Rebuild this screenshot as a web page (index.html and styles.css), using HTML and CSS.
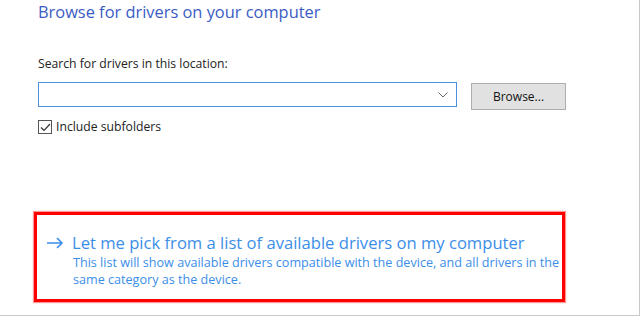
FILE: index.html
```html
<!DOCTYPE html>
<html lang="en">
<head>
    <meta charset="UTF-8">
    <title>Browse for drivers</title>
    <link rel="stylesheet" href="styles.css">
</head>
<body>
    <div class="ventana">
        <h1 class="titulo">Browse for drivers on your computer</h1>

        <p class="etiqueta">Search for drivers in this location:</p>
        <div class="fila">
            <div class="combo">
                <svg class="flecha" width="10" height="6" viewBox="0 0 10 6"><path d="M0.5 0.5 L5 5 L9.5 0.5" fill="none" stroke="#666" stroke-width="1"/></svg>
            </div>
            <button class="examinar">Browse...</button>
        </div>

        <label class="check">
            <span class="caja"><svg width="11" height="9" viewBox="0 0 11 9"><path d="M1 4.5 L4 7.5 L10 1" fill="none" stroke="#333" stroke-width="1.2"/></svg></span>
            Include subfolders
        </label>

        <div class="elegir">
            <div class="elegir-titulo">
                <svg class="flecha-link" width="18" height="12" viewBox="0 0 18 12"><path d="M1 6 H16 M11 1 L16 6 L11 11" fill="none" stroke="#3b8ee8" stroke-width="1.6"/></svg>
                <span>Let me pick from a list of available drivers on my computer</span>
            </div>
            <p class="elegir-texto">This list will show available drivers compatible with the device, and all drivers in the same category as the device.</p>
        </div>
    </div>
</body>
</html>
```

FILE: styles.css
```css
body{
    margin: 0;
    background-color: white;
    font-family: "Open Sans", "Noto Sans", sans-serif;
}

.ventana{
    width: 601px;
    height: 315px;
    padding-left: 38px;
    border-right: 1px solid #c9c9c9;
    border-bottom: 1px solid #c9c9c9;
    overflow: hidden;
}

.titulo{
    margin: 0;
    padding-top: 1px;
    font-size: 16.4px;
    font-weight: normal;
    color: #3a5cc4;
    line-height: 22px;
}

.etiqueta{
    margin: 33px 0 0 0;
    font-size: 12.2px;
    line-height: 16px;
    color: #222;
}

.fila{
    display: flex;
    align-items: flex-start;
    margin-top: 10px;
}

.combo{
    width: 417px;
    height: 23px;
    border: 1px solid #4a90dc;
    position: relative;
}

.flecha{
    position: absolute;
    right: 8px;
    top: 9px;
}

.examinar{
    margin-left: 14px;
    margin-top: 1px;
    width: 95px;
    height: 27px;
    background-color: #e1e1e1;
    border: 1px solid #adadad;
    font-family: "Open Sans", "Noto Sans", sans-serif;
    font-size: 12px;
    color: #111;
    padding: 0;
}

.check{
    display: flex;
    align-items: center;
    margin-top: 9px;
    font-size: 12.2px;
    color: #222;
    line-height: 16px;
}

.caja{
    width: 12px;
    height: 12px;
    border: 1px solid #555;
    margin-right: 4px;
    display: flex;
    align-items: center;
    justify-content: center;
}

.elegir{
    margin-top: 77px;
    margin-left: -4px;
    width: 516px;
    height: 84px;
    border: 3px solid #ff0000;
    box-shadow: 0 0 1px 1px rgba(255, 0, 0, 0.4);
    padding-left: 9px;
}

.elegir-titulo{
    display: flex;
    align-items: center;
    margin-top: 17px;
    font-size: 16.6px;
    line-height: 22px;
    color: #3b8ee8;
}

.flecha-link{
    margin-right: 8px;
}

.elegir-texto{
    margin: 0 0 0 27px;
    font-size: 12.6px;
    line-height: 17px;
    color: #3b8ee8;
}
```
